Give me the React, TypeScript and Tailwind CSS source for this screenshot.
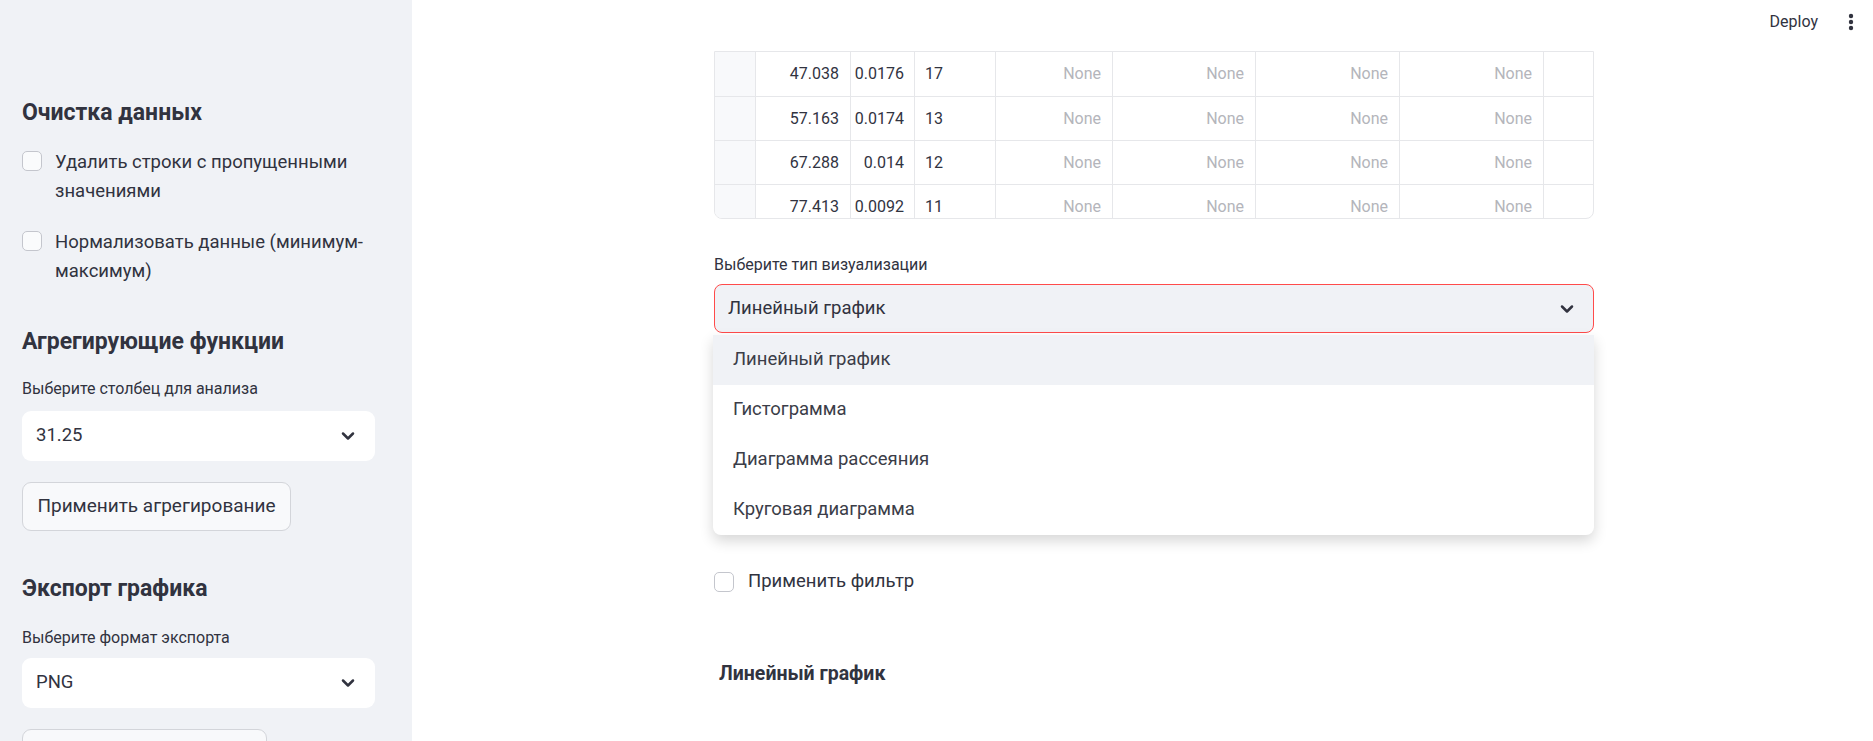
import { ChevronDown } from 'lucide-react';

const font = { fontFamily: 'Roboto, "Noto Sans", sans-serif' };

const rows = [
  ['47.038', '0.0176', '17'],
  ['57.163', '0.0174', '13'],
  ['67.288', '0.014', '12'],
  ['77.413', '0.0092', '11'],
];

const options = ['Линейный график', 'Гистограмма', 'Диаграмма рассеяния', 'Круговая диаграмма'];

function Checkbox({ label }: { label: React.ReactNode }) {
  return (
    <div className="flex items-start gap-[13px]">
      <div className="mt-[3px] h-5 w-5 shrink-0 rounded-[5px] border border-[#c4c6cd] bg-[#fafbfc]" />
      <div className="text-[18.5px] leading-[29px] text-[#31333f]">{label}</div>
    </div>
  );
}

function SideSelect({ value }: { value: string }) {
  return (
    <div className="flex h-[50px] w-[353px] items-center justify-between rounded-[9px] bg-white pl-[14px] pr-[17px] text-[18.5px] text-[#31333f]">
      <span>{value}</span>
      <ChevronDown size={20} strokeWidth={3} className="text-[#31333f]" />
    </div>
  );
}

export default function App() {
  return (
    <div className="flex h-[741px] w-[1873px] overflow-hidden bg-white" style={font}>
      <aside className="w-[412px] shrink-0 overflow-hidden bg-[#f0f2f6] px-[22px] pt-[99px]">
        <h2 className="text-[23px] font-bold leading-[28px] text-[#31333f]">Очистка данных</h2>
        <div className="mt-[21px] flex flex-col gap-[22px]">
          <Checkbox label={<>Удалить строки с пропущенными<br />значениями</>} />
          <Checkbox label={<>Нормализовать данные (минимум-<br />максимум)</>} />
        </div>
        <h2 className="mt-[42px] text-[23px] font-bold leading-[28px] text-[#31333f]">Агрегирующие функции</h2>
        <div className="mt-[23px] text-[16px] leading-[20px] text-[#31333f]">Выберите столбец для анализа</div>
        <div className="mt-[12px]"><SideSelect value="31.25" /></div>
        <button className="mt-[21px] block h-[49px] w-[269px] rounded-[9px] border border-[#d3d5da] bg-[#f8f9fb] text-[19px] text-[#31333f]">Применить агрегирование</button>
        <h2 className="mt-[44px] text-[23px] font-bold leading-[28px] text-[#31333f]">Экспорт графика</h2>
        <div className="mt-[25px] text-[16px] leading-[20px] text-[#31333f]">Выберите формат экспорта</div>
        <div className="mt-[10px]"><SideSelect value="PNG" /></div>
        <div className="mt-[21px] h-[49px] w-[245px] rounded-[9px] border border-[#d3d5da] bg-[#f8f9fb]" />
      </aside>

      <main className="relative flex-1">
        <div className="absolute right-[19px] top-[10px] flex items-center gap-[30px] text-[#31333f]">
          <span className="text-[16px]">Deploy</span>
          <svg width="6" height="18" viewBox="0 0 6 18"><circle cx="3" cy="3" r="2.2" fill="#31333f" /><circle cx="3" cy="9" r="2.2" fill="#31333f" /><circle cx="3" cy="15" r="2.2" fill="#31333f" /></svg>
        </div>

        <div className="ml-[302px] flex w-[880px] flex-col pt-[51px]">
          <div className="h-[168px] shrink-0 overflow-hidden rounded-b-[8px] border border-[#e6e7ea] text-[16px] text-[#31333f]">
            {rows.map((r, i) => (
              <div key={i} className={`flex h-[44px] items-center ${i > 0 ? 'border-t border-[#e6e7ea]' : ''}`}>
                <div className="h-full w-[41px] border-r border-[#e6e7ea] bg-[#f8f9fb]" />
                <div className="flex h-full w-[95px] items-center justify-end border-r border-[#e6e7ea] pr-[11px]">{r[0]}</div>
                <div className="flex h-full w-[64px] items-center justify-end border-r border-[#e6e7ea] pr-[10px]">{r[1]}</div>
                <div className="flex h-full w-[81px] items-center border-r border-[#e6e7ea] pl-[10px]">{r[2]}</div>
                <div className="flex h-full w-[117px] items-center justify-end border-r border-[#e6e7ea] pr-[11px] text-[#b4b5bb]">None</div>
                <div className="flex h-full w-[143px] items-center justify-end border-r border-[#e6e7ea] pr-[11px] text-[#b4b5bb]">None</div>
                <div className="flex h-full w-[144px] items-center justify-end border-r border-[#e6e7ea] pr-[11px] text-[#b4b5bb]">None</div>
                <div className="flex h-full w-[144px] items-center justify-end border-r border-[#e6e7ea] pr-[11px] text-[#b4b5bb]">None</div>
                <div className="flex-1" />
              </div>
            ))}
          </div>

          <div className="mt-[36px] text-[16px] leading-[20px] text-[#31333f]">Выберите тип визуализации</div>
          <div className="relative mt-[9px]">
            <div className="flex h-[49px] items-center justify-between rounded-[8px] border border-[#ff4b4b] bg-[#f0f2f6] pl-[13px] pr-[16px] text-[18.5px] text-[#31333f]">
              <span>Линейный график</span>
              <ChevronDown size={20} strokeWidth={3} className="text-[#31333f]" />
            </div>
            <div className="absolute left-[-1px] right-0 top-[51px] z-10 overflow-hidden rounded-b-[8px] bg-white shadow-[0_6px_14px_rgba(0,0,0,0.16)]">
              {options.map((o, i) => (
                <div key={o} className={`flex h-[50px] items-center pl-[20px] text-[18.5px] text-[#3b3d48] ${i === 0 ? 'bg-[#f0f2f6]' : ''}`}>{o}</div>
              ))}
            </div>
          </div>

          <div className="mt-[235px] flex items-center gap-[14px]">
            <div className="h-5 w-5 rounded-[5px] border border-[#c4c6cd] bg-white" />
            <span className="text-[18.5px] text-[#31333f]">Применить фильтр</span>
          </div>

          <div className="ml-[5px] mt-[63px] text-[19.5px] font-bold text-[#31333f]">Линейный график</div>
        </div>
      </main>
    </div>
  );
}
